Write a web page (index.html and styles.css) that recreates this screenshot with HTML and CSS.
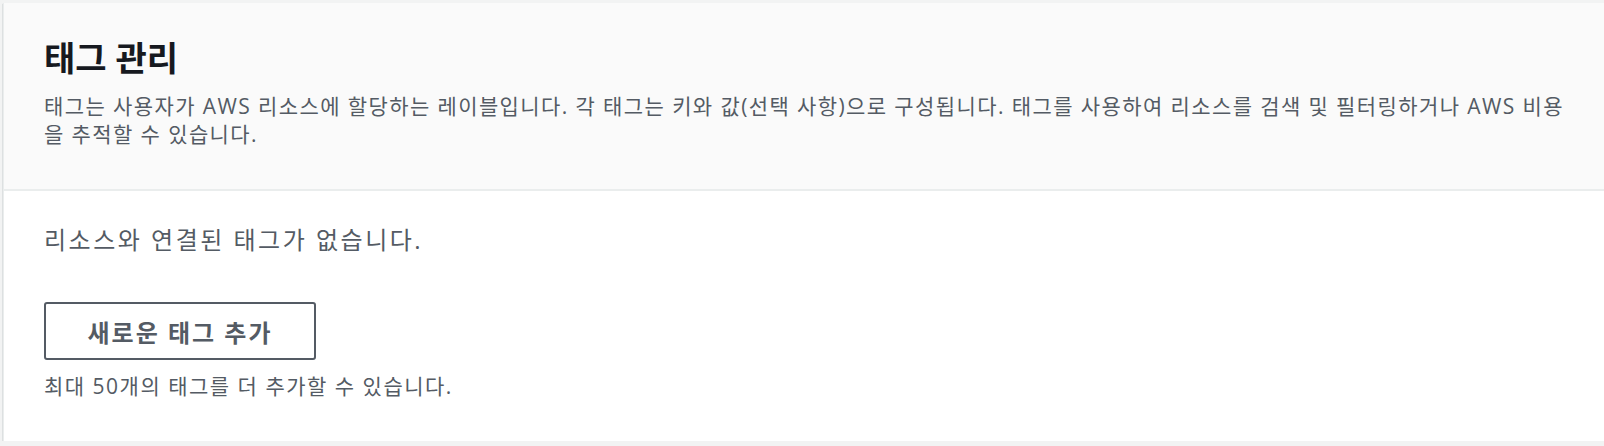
FILE: index.html
```html
<!DOCTYPE html>
<html lang="ko">
<head>
    <meta charset="utf-8">
    <title>태그 관리</title>
    <link rel="stylesheet" href="styles.css">
</head>
<body>
    <section class="panel">
        <header class="panel-header">
            <h2 class="panel-title">태그 관리</h2>
            <p class="panel-desc">태그는 사용자가 AWS 리소스에 할당하는 레이블입니다. 각 태그는 키와 값(선택 사항)으로 구성됩니다. 태그를 사용하여 리소스를 검색 및 필터링하거나 AWS 비용을 추적할 수 있습니다.</p>
        </header>
        <div class="panel-body">
            <p class="empty-msg">리소스와 연결된 태그가 없습니다.</p>
            <button class="btn-add" type="button">새로운 태그 추가</button>
            <p class="hint">최대 50개의 태그를 더 추가할 수 있습니다.</p>
        </div>
    </section>
</body>
</html>
```

FILE: styles.css
```css
body {
    margin: 0;
    padding: 3px 0 0 3px;
    background: #f2f3f3;
    font-family: "Open Sans", "Noto Sans CJK KR", sans-serif;
    color: #545b64;
}

.panel {
    background: #fff;
    border-left: 1px solid #eaeded;
    box-shadow: 0 1px 1px 0 rgba(0, 28, 36, 0.5), 1px 1px 1px 0 rgba(0, 28, 36, 0.15);
    height: 438px;
    box-sizing: border-box;
}

.panel-header {
    background: #fafafa;
    border-bottom: 2px solid #eaeded;
    padding: 35px 34px 0 40px;
    height: 188px;
    box-sizing: border-box;
}

.panel-title {
    margin: 0;
    font-size: 34px;
    line-height: 40px;
    font-weight: 700;
    color: #16191f;
}

.panel-desc {
    margin: 14px 0 0 0;
    font-size: 21px;
    line-height: 28px;
    letter-spacing: 1.4px;
}

.panel-body {
    padding: 33px 40px 0;
}

.empty-msg {
    margin: 0 0 46px 0;
    font-size: 24px;
    line-height: 32px;
    letter-spacing: 2.5px;
}

.btn-add {
    display: block;
    width: 272px;
    height: 58px;
    padding: 0;
    border: 2px solid #545b64;
    border-radius: 3px;
    background: #fff;
    color: #545b64;
    font-family: inherit;
    font-size: 24px;
    font-weight: 700;
    letter-spacing: 2px;
}

.hint {
    margin: 13px 0 0 0;
    font-size: 21px;
    line-height: 26px;
    letter-spacing: 1.5px;
}
```
